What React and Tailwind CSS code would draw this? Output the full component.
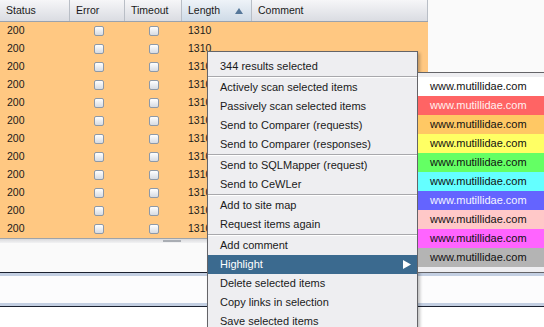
import React from 'react';

const cols = [
  { label: 'Status', w: 'w-[70px]' },
  { label: 'Error', w: 'w-[55px]' },
  { label: 'Timeout', w: 'w-[57px]' },
  { label: 'Length', w: 'w-[70px]', sorted: true },
  { label: 'Comment', w: 'flex-1' },
];

const rows = Array.from({ length: 12 }, () => ({ status: '200', length: '1310' }));

// context menu entries, 'sep' draws a divider
const menu = [
  'Actively scan selected items',
  'Passively scan selected items',
  'Send to Comparer (requests)',
  'Send to Comparer (responses)',
  'sep',
  'Send to SQLMapper (request)',
  'Send to CeWLer',
  'sep',
  'Add to site map',
  'Request items again',
  'sep',
  'Add comment',
  'Highlight',
  'Delete selected items',
  'Copy links in selection',
  'Save selected items',
];

const colours = [
  'bg-white text-[#111]',
  'bg-[#ff6464] text-[#fff0f0]',
  'bg-[#ffc864] text-[#111]',
  'bg-[#ffff64] text-[#111]',
  'bg-[#64ff64] text-[#111]',
  'bg-[#64ffff] text-[#111]',
  'bg-[#6464ff] text-[#f4f4ff]',
  'bg-[#ffc8c8] text-[#111]',
  'bg-[#ff64ff] text-[#111]',
  'bg-[#b4b4b4] text-[#111]',
];

const Checkbox = () => (
  <div className="w-[10px] h-[10px] rounded-[2px] border border-[#8d99a8] bg-gradient-to-b from-white to-[#d6dbe3]" />
);

const HeaderCell = ({ col }) => (
  <div
    className={`${col.w} h-full flex items-center px-[6px] border-r border-[#b9bec6] ${
      col.sorted ? 'bg-gradient-to-b from-[#eef3f8] to-[#cfdbe7]' : ''
    }`}
  >
    <span className="flex-1">{col.label}</span>
    {col.sorted && (
      <svg width="8" height="6" viewBox="0 0 8 6" className="mr-[2px]">
        <polygon points="4,0 8,6 0,6" fill="#56789a" />
      </svg>
    )}
  </div>
);

const Sep = () => <div className="h-[2px] border-t border-[#a8a8ac] border-b border-b-white" />;

export default function App() {
  return (
    <div
      className="relative w-[544px] h-[327px] overflow-hidden bg-[#fafafa] text-[#1a1a1a]"
      style={{ fontFamily: '"Liberation Sans", Arial, sans-serif' }}
    >
      {/* results table */}
      <div className="flex">
        <div className="w-[428px] text-[10.5px]">
          <div className="flex h-[22px] border-b border-[#9aa2ad] bg-gradient-to-b from-[#f6f6f8] to-[#dadce2]">
            {cols.map((c) => (
              <HeaderCell key={c.label} col={c} />
            ))}
          </div>
          {rows.map((r, i) => (
            <div key={i} className="flex h-[18px] items-center bg-[#ffc882]">
              <div className="w-[70px] pl-[7px]">{r.status}</div>
              <div className="w-[55px] flex justify-center pl-[3px]">
                <Checkbox />
              </div>
              <div className="w-[57px] flex justify-center">
                <Checkbox />
              </div>
              <div className="w-[70px] pl-[6px]">{r.length}</div>
              <div className="flex-1" />
            </div>
          ))}
        </div>
        <div className="flex-1 bg-[#fafafa]" />
      </div>

      {/* scroll strip */}
      <div className="h-[5px] border-t border-[#9ea3a9] bg-gradient-to-b from-[#d9dadd] to-[#f2f2f3] flex items-center">
        <div className="ml-[163px] w-[18px] h-[2px] bg-[#a9adb3]" />
      </div>

      <div className="h-[29px] bg-[#fafafa]" />
      <div className="h-px bg-[#1b2130]" />
      <div className="h-[3px] bg-[#c3cfe2]" />
      <div className="h-[27px] bg-[#fcfcfd]" />
      <div className="h-[3px] bg-[#c3cfe2]" />
      <div className="h-px bg-[#1b2130]" />
      <div className="flex-1 bg-white h-[30px]" />

      {/* context menu */}
      <div className="absolute left-[207px] top-[51px] w-[211px] border border-[#646468] bg-[#eeeef1] pt-[5px] text-[11px] shadow-[2px_2px_3px_rgba(0,0,0,0.25)]">
        <div className="h-[19px] flex items-center pl-[12px]">344 results selected</div>
        <Sep />
        {menu.map((m, i) =>
          m === 'sep' ? (
            <Sep key={i} />
          ) : m === 'Highlight' ? (
            <div key={i} className="h-[19px] flex items-center pl-[12px] pr-[6px] bg-[#3b6a8f] text-white">
              <span className="flex-1">{m}</span>
              <svg width="8" height="9" viewBox="0 0 8 9">
                <polygon points="0,0 8,4.5 0,9" fill="#ffffff" />
              </svg>
            </div>
          ) : (
            <div key={i} className="h-[19px] flex items-center pl-[12px]">
              {m}
            </div>
          )
        )}
      </div>

      {/* highlight submenu */}
      <div className="absolute left-[417px] top-[72px] w-[132px] border border-[#646468] bg-[#eeeef1] pt-[4px] pb-[5px] text-[11px]">
        {colours.map((c, i) => (
          <div key={i} className={`h-[19px] flex items-center pl-[12px] ${c}`}>
            www.mutillidae.com
          </div>
        ))}
      </div>
    </div>
  );
}
